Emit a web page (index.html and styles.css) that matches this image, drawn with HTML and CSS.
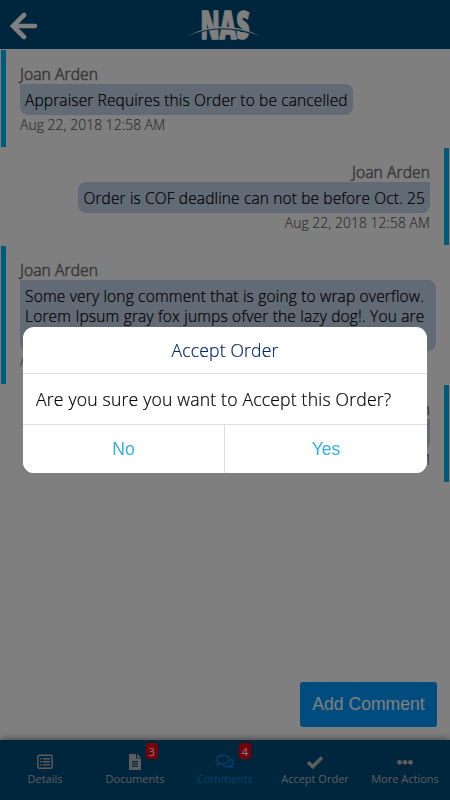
FILE: index.html
```
<!DOCTYPE html>
<html lang="en">
<head>
    <meta charset="UTF-8">
    <meta name="viewport" content="width=device-width, initial-scale=1.0">
    <title>Comments</title>
    <link rel="stylesheet" href="styles.css">
</head>
<body>

<div class="page">
    <header class="header">
        <svg class="back" width="30" height="30" viewBox="0 0 30 30">
            <path d="M14 5 L3 16 L14 27 M3.5 16 H25" />
        </svg>
        <svg class="logo" width="80" height="44" viewBox="0 0 80 44">
            <text x="15.5" y="36" textLength="49" lengthAdjust="spacingAndGlyphs">NAS</text>
            <path class="gap" d="M0 34.5 Q38 15.5 79 35.5" />
            <path class="swoosh" d="M2 33.5 Q38 13 78 34.5 Q38 16.5 2 33.5 Z" />
        </svg>
    </header>

    <main class="comments">
        <div class="comment">
            <div class="name">Joan Arden</div>
            <div class="bubble">Appraiser Requires this Order to be cancelled</div>
            <div class="date">Aug 22, 2018 12:58 AM</div>
        </div>
        <div class="comment mine">
            <div class="name">Joan Arden</div>
            <div class="bubble">Order is COF deadline can not be before Oct. 25</div>
            <div class="date">Aug 22, 2018 12:58 AM</div>
        </div>
        <div class="comment">
            <div class="name">Joan Arden</div>
            <div class="bubble long">Some very long comment that is going to wrap overflow.<br>Lorem Ipsum gray fox jumps ofver the lazy dog!. You are<br>welcome</div>
            <div class="date">Aug 22, 2018 12:58 AM</div>
        </div>
        <div class="comment mine">
            <div class="name">Joan Arden</div>
            <div class="bubble">Thank you</div>
            <div class="date">Aug 22, 2018 12:58 AM</div>
        </div>
    </main>

    <div class="actions">
        <button class="add">Add Comment</button>
    </div>

    <nav class="tabs">
        <div class="tab">
            <svg width="16" height="16" viewBox="0 0 16 16">
                <rect class="line" x=".8" y="1.3" width="14.4" height="13" rx="1.5" />
                <path class="line" d="M3 4.7h1.5M3 7.8h1.5M3 10.9h1.5M5.7 4.7H13M5.7 7.8H13M5.7 10.9H13" />
            </svg>
            <span>Details</span>
        </div>
        <div class="tab">
            <svg width="16" height="16" viewBox="0 0 16 16">
                <path fill-rule="evenodd" d="M2 0H9v4.5h5V16H2zM10 0l4 3.7h-4zM5 7v1.2h6V7zM5 9.3v1.2h6V9.3zM5 11.6v1.2h6v-1.2z" />
            </svg>
            <span>Documents</span>
            <b class="badge">3</b>
        </div>
        <div class="tab active">
            <svg width="18" height="16" viewBox="0 0 18 16">
                <path class="line" d="M7 1.2c3.5 0 6 1.8 6 4.2s-2.5 4.2-6 4.2c-.8 0-1.5-.1-2.2-.3C3.8 10.1 2.6 10.5 1.5 10.6c.6-.6 1-1.3 1.2-2C1.5 7.8 1 6.7 1 5.4 1 3 3.5 1.2 7 1.2z" />
                <path class="line" d="M14.3 5c1.7.8 2.7 2 2.7 3.4 0 1.2-.7 2.2-1.8 3 .2.9.7 1.6 1.3 2.2-1.3-.1-2.5-.5-3.4-1.3-2.4.5-4.6 0-6.1-1.1" />
            </svg>
            <span>Comments</span>
            <b class="badge">4</b>
        </div>
        <div class="tab">
            <svg width="18" height="16" viewBox="0 0 18 16">
                <path class="check" d="M2 8.2 L6.7 12.7 L16 3.4" />
            </svg>
            <span>Accept Order</span>
        </div>
        <div class="tab">
            <svg width="16" height="16" viewBox="0 0 16 16">
                <circle cx="2.5" cy="8.3" r="2.4" />
                <circle cx="8" cy="8.3" r="2.4" />
                <circle cx="13.5" cy="8.3" r="2.4" />
            </svg>
            <span>More Actions</span>
        </div>
    </nav>
</div>

<div class="overlay">
    <div class="dialog">
        <div class="dialog-title">Accept Order</div>
        <div class="dialog-text">Are you sure you want to Accept this Order?</div>
        <div class="dialog-buttons">
            <button>No</button>
            <button>Yes</button>
        </div>
    </div>
</div>

</body>
</html>
```
FILE: styles.css
```
* {
    box-sizing: border-box;
}

body {
    margin: 0;
    font-family: "Open Sans", sans-serif;
    font-weight: 300;
    background-color: #fff;
}

.page {
    display: flex;
    flex-direction: column;
    height: 800px;
    overflow: hidden;
}

.header {
    display: grid;
    grid-template-columns: 1fr 80px 1fr;
    align-items: center;
    height: 49px;
    padding: 0 10px;
    background-color: #004c7a;
}

.back {
    fill: none;
    stroke: #fff;
    stroke-width: 4.6;
    stroke-linecap: round;
}

.logo {
    overflow: visible;
}

.logo text {
    font-family: "Open Sans", sans-serif;
    font-size: 38px;
    font-weight: 800;
    fill: #fff;
    stroke: #fff;
    stroke-width: 1.5;
}

.logo .gap {
    fill: none;
    stroke: #004c7a;
    stroke-width: 2;
}

.logo .swoosh {
    fill: #fff;
}

.comments {
    flex: 1;
    padding: 1px 1px 0;
}

.comment {
    display: flex;
    flex-direction: column;
    align-items: flex-start;
    margin-bottom: 1px;
    padding: 13px 8px 12px 14px;
    border-left: 5px solid #00b4f4;
    height: 97px;
}

.comment:nth-child(3) {
    height: 138px;
}

.mine {
    align-items: flex-end;
    padding: 13px 14px 12px 14px;
    border-left: none;
    border-right: 5px solid #00b4f4;
}

.name {
    font-size: 15.6px;
    line-height: 22px;
    height: 21px;
    color: #777;
    letter-spacing: .1px;
    -webkit-text-stroke: .6px #777;
}

.bubble {
    padding: 6px 5px 5px;
    border-radius: 0 8px 8px 8px;
    background-color: #c4d4ec;
    color: #000;
    font-size: 15.5px;
    line-height: 20px;
    letter-spacing: .13px;
    white-space: nowrap;
    -webkit-text-stroke: .2px #000;
}

.long {
    width: 416px;
    letter-spacing: .18px;
}

.mine .bubble {
    border-radius: 8px 0 8px 8px;
}

.date {
    font-size: 13.8px;
    line-height: 19px;
    letter-spacing: .1px;
    color: #666;
    -webkit-text-stroke: .2px #666;
}

.actions {
    display: flex;
    justify-content: flex-end;
    padding: 0 13px 13px;
}

.add {
    width: 137px;
    height: 45px;
    border: none;
    border-radius: 3px;
    background-color: #0099ff;
    color: #fff;
    font-family: "Liberation Sans", sans-serif;
    font-size: 17.6px;
}

.tabs {
    display: flex;
    height: 60px;
    background-color: #004c7a;
    box-shadow: 0 0 8px rgba(0, 0, 0, .6);
}

.tab {
    position: relative;
    flex: 1;
    display: flex;
    flex-direction: column;
    align-items: center;
    padding-top: 14px;
    color: #bbb;
    font-size: 11px;
    font-weight: 400;
    line-height: 17px;
}

.tab svg {
    fill: currentColor;
}

.tab .line {
    fill: none;
    stroke: currentColor;
    stroke-width: 1.4;
}

.tab .check {
    fill: none;
    stroke: currentColor;
    stroke-width: 3.5;
}

.active {
    color: #0088dd;
}

.badge {
    position: absolute;
    top: 3px;
    left: 56px;
    width: 12px;
    height: 16px;
    border-radius: 3px;
    background-color: #f00010;
    color: #fff;
    font-weight: 400;
    text-align: center;
}

.active .badge {
    left: 59px;
}

.overlay {
    position: fixed;
    inset: 0;
    display: flex;
    align-items: center;
    justify-content: center;
    background-color: rgba(0, 0, 0, .5);
}

.dialog {
    width: 404px;
    height: 146px;
    border-radius: 11px;
    overflow: hidden;
    background-color: #fff;
}

.dialog-title {
    height: 47px;
    border-bottom: 1px solid #ddd;
    color: #00266b;
    font-size: 17.6px;
    line-height: 47px;
    letter-spacing: .15px;
    text-align: center;
    -webkit-text-stroke: .2px #00266b;
}

.dialog-text {
    height: 51px;
    padding-left: 13px;
    border-bottom: 1px solid #ddd;
    font-size: 17.6px;
    line-height: 50px;
    letter-spacing: .19px;
    white-space: nowrap;
    -webkit-text-stroke: .2px #000;
}

.dialog-buttons {
    display: grid;
    grid-template-columns: 201px 203px;
    height: 48px;
}

.dialog-buttons button {
    border: none;
    background-color: #fff;
    color: #37afe1;
    font-family: "Liberation Sans", sans-serif;
    font-size: 17.6px;
}

.dialog-buttons button + button {
    border-left: 1px solid #ddd;
}
```
